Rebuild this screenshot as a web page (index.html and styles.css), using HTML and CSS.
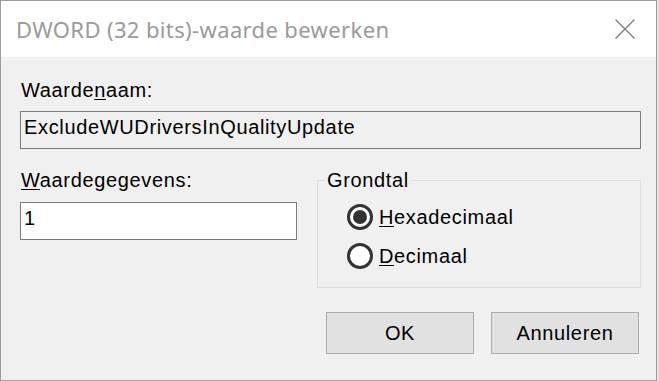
FILE: index.html
```html
<!DOCTYPE html>
<html>
<head>
    <title>DWORD bewerken</title>
    <link rel="stylesheet" href="styles.css">
</head>
<body>
    <div class="dialog">
        <div class="titlebar">
            <span class="title">DWORD (32 bits)-waarde bewerken</span>
            <svg class="close" width="20" height="20" viewBox="0 0 20 20">
                <path d="M0.5 0.5 L19.5 19.5 M19.5 0.5 L0.5 19.5" stroke="#7c7c7c" stroke-width="1.3" fill="none"/>
            </svg>
        </div>

        <div class="content">
            <div class="label">Waarde<u>n</u>aam:</div>
            <div class="field readonly">ExcludeWUDriversInQualityUpdate</div>

            <div class="row">
                <div class="data">
                    <div class="label"><u>W</u>aardegegevens:</div>
                    <div class="field input">1</div>
                </div>

                <fieldset class="base">
                    <legend>Grondtal</legend>
                    <div class="radio-list">
                        <div class="radio-row">
                            <span class="radio checked"></span>
                            <span><u>H</u>exadecimaal</span>
                        </div>
                        <div class="radio-row">
                            <span class="radio"></span>
                            <span><u>D</u>ecimaal</span>
                        </div>
                    </div>
                </fieldset>
            </div>

            <div class="buttons">
                <div class="btn">OK</div>
                <div class="btn">Annuleren</div>
            </div>
        </div>
    </div>
</body>
</html>
```

FILE: styles.css
```css
body {
    margin: 0;
    background-color: #e4e4e4;
    font-family: "Liberation Sans", Arial, sans-serif;
    font-size: 20px;
    line-height: 24px;
    letter-spacing: 0.65px;
    color: #000;
}
.dialog {
    width: 657px;
    height: 381px;
    box-sizing: border-box;
    border: 1px solid #9d9d9d;
    background-color: #f0f0f0;
    display: flex;
    flex-direction: column;
}
.titlebar {
    height: 56px;
    flex-shrink: 0;
    background-color: #fff;
    display: flex;
    align-items: center;
    justify-content: space-between;
    padding: 0 21px 0 15px;
}
.title {
    font-family: "Noto Sans", sans-serif;
    font-size: 22px;
    letter-spacing: 0.37px;
    color: #9a9a9a;
}
.close {
    display: block;
}
.content {
    flex: 1;
    padding: 21px 15px 0 19px;
}
.label {
    margin-left: 1px;
}
u {
    text-decoration-thickness: 1px;
    text-underline-offset: 2px;
}
.field {
    height: 38px;
    box-sizing: border-box;
    border: 1px solid #7a7a7a;
    padding: 3px;
    margin-top: 9px;
    white-space: nowrap;
}
.field.readonly {
    background-color: #f0f0f0;
}
.field.input {
    background-color: #fff;
    margin-top: 10px;
}
.row {
    display: flex;
    align-items: flex-start;
    gap: 20px;
    margin-top: 19px;
}
.data {
    width: 277px;
}
.base {
    width: 324px;
    box-sizing: border-box;
    margin: 0;
    padding: 12px 0 18px 7px;
    border: 1px solid #dcdcdc;
    min-width: 0;
}
.base legend {
    padding: 0 2px;
    line-height: 24px;
}
.radio-list {
    margin-left: 22px;
    display: flex;
    flex-direction: column;
    gap: 13px;
}
.radio-row {
    display: flex;
    align-items: center;
    gap: 6px;
    height: 26px;
}
.radio {
    width: 26px;
    height: 26px;
    box-sizing: border-box;
    border: 3px solid #333;
    border-radius: 50%;
    background-color: #fff;
}
.radio.checked::after {
    content: "";
    display: block;
    width: 14px;
    height: 14px;
    margin: 3px;
    border-radius: 50%;
    background-color: #333;
}
.buttons {
    display: flex;
    justify-content: flex-end;
    gap: 17px;
    margin-top: 24px;
    padding-right: 2px;
}
.btn {
    width: 148px;
    height: 42px;
    box-sizing: border-box;
    border: 1px solid #adadad;
    background-color: #e1e1e1;
    display: flex;
    align-items: center;
    justify-content: center;
}
```
